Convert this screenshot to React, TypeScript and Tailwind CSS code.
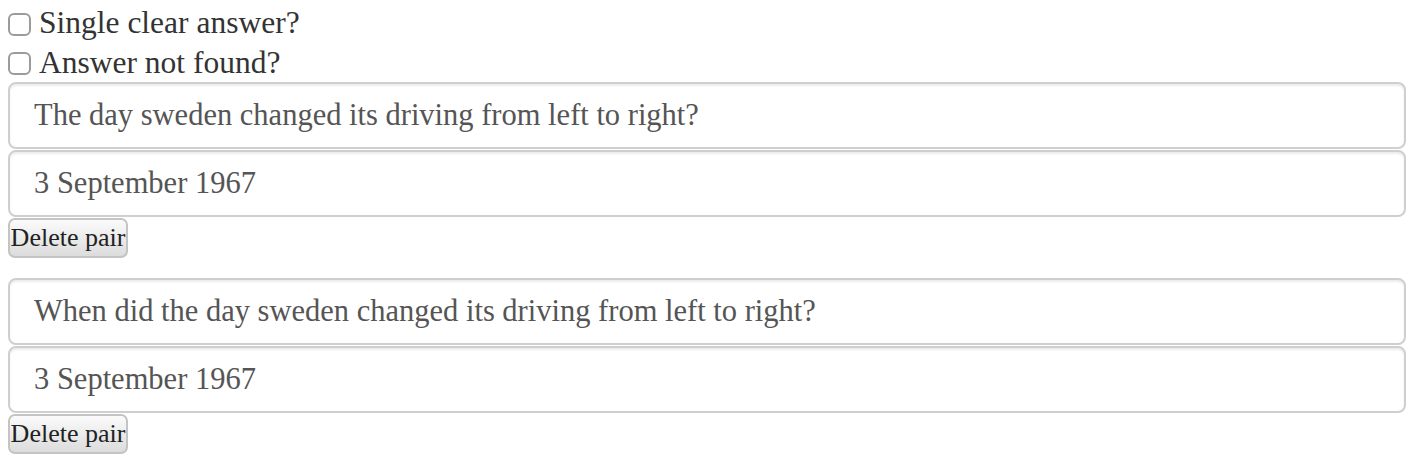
import { useState } from 'react';

interface QAPair {
  question: string;
  answer: string;
}

const initialPairs: QAPair[] = [
  { question: 'The day sweden changed its driving from left to right?', answer: '3 September 1967' },
  { question: 'When did the day sweden changed its driving from left to right?', answer: '3 September 1967' },
];

export default function App() {
  const [singleClear, setSingleClear] = useState(false);
  const [notFound, setNotFound] = useState(false);
  const [pairs, setPairs] = useState<QAPair[]>(initialPairs);

  const updatePair = (index: number, field: keyof QAPair, value: string) => {
    setPairs(prev => prev.map((p, i) => (i === index ? { ...p, [field]: value } : p)));
  };

  const deletePair = (index: number) => {
    setPairs(prev => prev.filter((_, i) => i !== index));
  };

  return (
    <div className="pl-2 pt-[3px] font-['Liberation_Serif',serif] text-[#333] bg-white min-h-[462px]">
      <label className="flex items-center h-[40px] gap-2 text-[31.5px]">
        <input
          type="checkbox"
          checked={singleClear}
          onChange={e => setSingleClear(e.target.checked)}
          className="appearance-none w-[23px] h-[23px] border-2 border-[#9b9b9b] rounded-[6px] bg-white mt-[2px]"
        />
        <span>Single clear answer?</span>
      </label>
      <label className="flex items-center h-[39px] gap-2 text-[31.5px]">
        <input
          type="checkbox"
          checked={notFound}
          onChange={e => setNotFound(e.target.checked)}
          className="appearance-none w-[23px] h-[23px] border-2 border-[#9b9b9b] rounded-[6px] bg-white mt-[2px]"
        />
        <span>Answer not found?</span>
      </label>

      {pairs.map((pair, index) => (
        <div key={index} className={index > 0 ? 'mt-[20px]' : ''}>
          <input
            type="text"
            value={pair.question}
            onChange={e => updatePair(index, 'question', e.target.value)}
            className="block w-[1398px] h-[67px] px-[24px] border-2 border-[#cfcfcf] rounded-[8px] shadow-[inset_0_2px_2px_rgba(0,0,0,0.08)] text-[30.5px] text-[#555] outline-none font-['Liberation_Serif',serif]"
          />
          <input
            type="text"
            value={pair.answer}
            onChange={e => updatePair(index, 'answer', e.target.value)}
            className="block mt-[1px] w-[1398px] h-[67px] px-[24px] border-2 border-[#cfcfcf] rounded-[8px] shadow-[inset_0_2px_2px_rgba(0,0,0,0.08)] text-[30.5px] text-[#555] outline-none font-['Liberation_Serif',serif]"
          />
          <button
            onClick={() => deletePair(index)}
            className="block mt-[1px] h-[40px] w-[120px] border-2 border-[#c4c4c4] rounded-[7px] bg-gradient-to-b from-[#fbfbfb] to-[#dcdcdc] text-[26px] leading-none text-[#222] font-['Liberation_Serif',serif]"
          >
            Delete pair
          </button>
        </div>
      ))}
    </div>
  );
}
